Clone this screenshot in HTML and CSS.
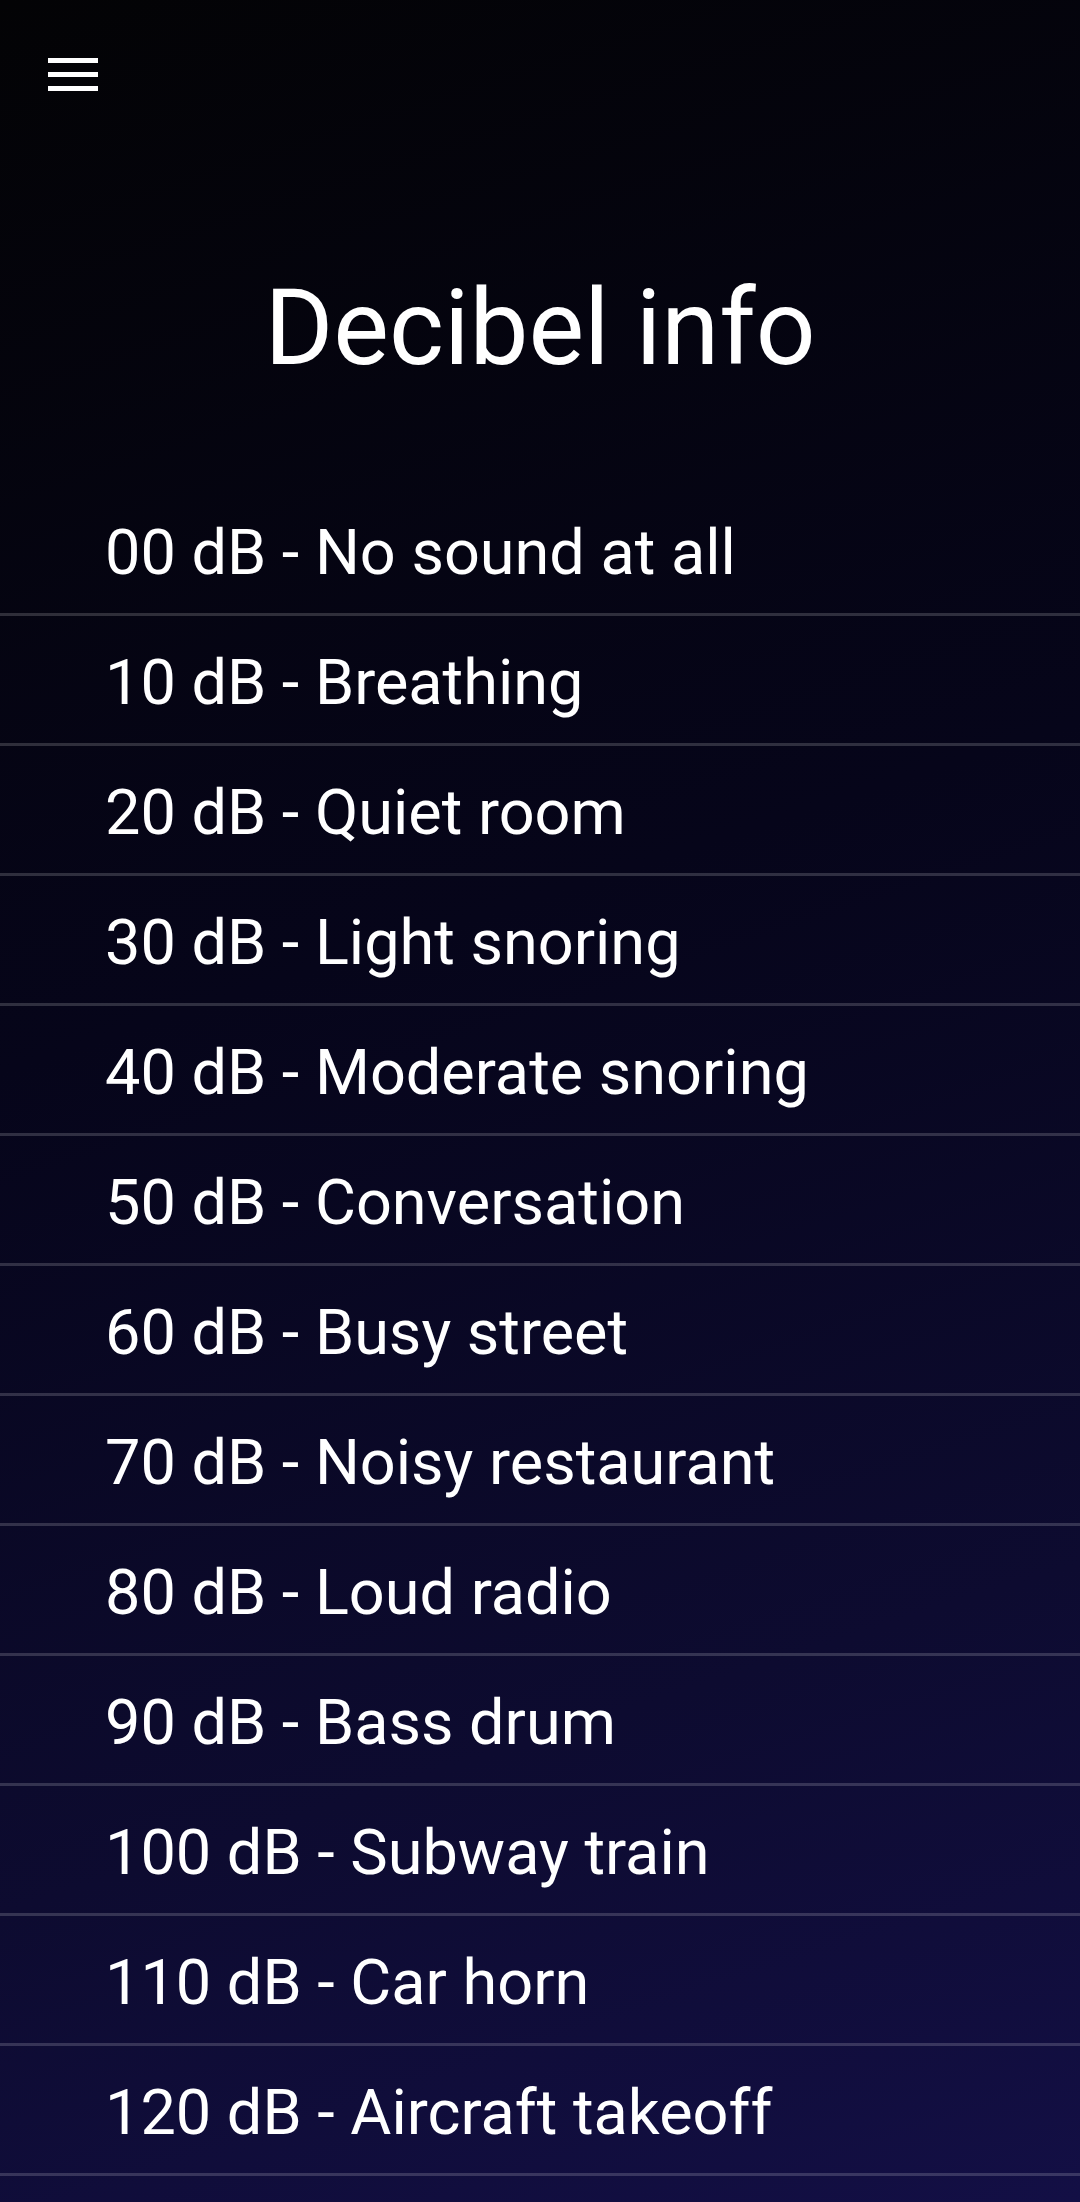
FILE: index.html
```html
<!DOCTYPE html>
<html lang="en">
<head>
<meta charset="utf-8">
<title>Decibel info</title>
<link rel="stylesheet" href="styles.css">
</head>
<body>
<div class="screen">
  <header class="toolbar">
    <button class="menu" aria-label="Menu">
      <span class="bar"></span>
      <span class="bar"></span>
      <span class="bar"></span>
    </button>
  </header>
  <h1 class="title">Decibel info</h1>
  <ul class="list">
    <li class="row">00 dB - No sound at all</li>
    <li class="row">10 dB - Breathing</li>
    <li class="row">20 dB - Quiet room</li>
    <li class="row">30 dB - Light snoring</li>
    <li class="row">40 dB - Moderate snoring</li>
    <li class="row">50 dB - Conversation</li>
    <li class="row">60 dB - Busy street</li>
    <li class="row">70 dB - Noisy restaurant</li>
    <li class="row">80 dB - Loud radio</li>
    <li class="row">90 dB - Bass drum</li>
    <li class="row">100 dB - Subway train</li>
    <li class="row">110 dB - Car horn</li>
    <li class="row">120 dB - Aircraft takeoff</li>
  </ul>
</div>
</body>
</html>
```

FILE: styles.css
```css
html, body {
  margin: 0;
  padding: 0;
}

body {
  font-family: Roboto, "Noto Sans", "Liberation Sans", sans-serif;
  color: #ffffff;
  background: #050409;
}

.screen {
  min-height: 2202px;
  overflow: hidden;
  background: linear-gradient(162deg, #030305 0%, #06051a 42%, #0d0b30 75%, #130f45 100%);
}

.toolbar {
  height: 150px;
  display: flex;
  align-items: flex-start;
}

.menu {
  margin: 58px 0 0 48px;
  padding: 0;
  border: 0;
  background: transparent;
  width: 50px;
  display: flex;
  flex-direction: column;
  gap: 9px;
  cursor: pointer;
}

.bar {
  display: block;
  width: 50px;
  height: 5px;
  background: #ffffff;
}

.title {
  margin: 116px 0 94px;
  font-size: 105px;
  font-weight: 400;
  line-height: 126px;
  text-align: center;
}

.list {
  list-style: none;
  margin: 0;
  padding: 0;
}

.row {
  box-sizing: content-box;
  display: flex;
  align-items: center;
  padding: 6px 0 0 105px;
  height: 121px;
  font-size: 63px;
  line-height: 75px;
  border-bottom: 3px solid rgba(255, 255, 255, 0.17);
}
```
